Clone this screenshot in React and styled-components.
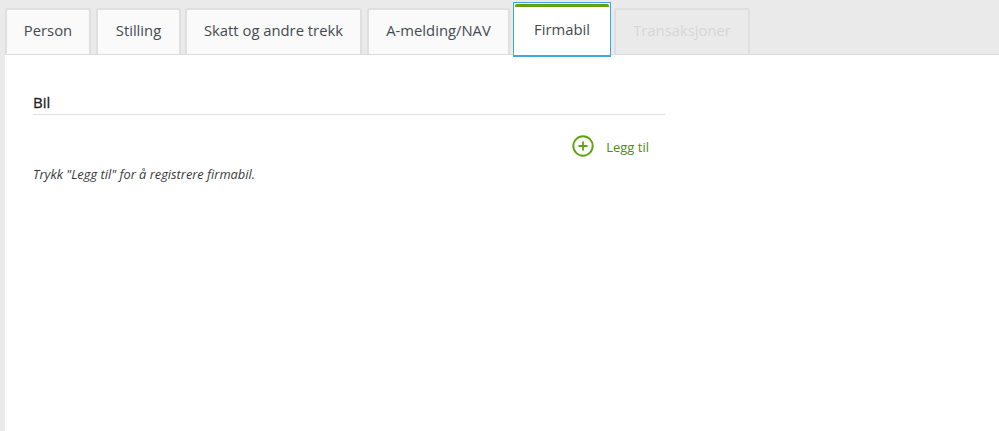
import React from "react";
import styled, { createGlobalStyle } from "styled-components";

const Global = createGlobalStyle`
  html, body { margin: 0; padding: 0; background: #fff; }
  body { font-family: "Open Sans", "Noto Sans", sans-serif; overflow: hidden; }
`;
const Page = styled.div`
  width: 999px; height: 431px; box-sizing: border-box;
  display: flex; flex-direction: column; background: #eaeaea; padding-left: 5px;
`;
const TabBar = styled.div`
  height: 54px; display: flex; align-items: flex-end; flex: none; position: relative; z-index: 1;
`;
const Tab = styled.div`
  box-sizing: border-box; height: 46px; width: ${p => p.$w}px; margin-right: ${p => p.$gap ?? 5}px;
  display: flex; align-items: center; justify-content: center; padding-bottom: 4px;
  font-size: 14.8px; color: ${p => (p.$disabled ? "#d6d6d6" : "#444b52")};
  background: ${p => (p.$disabled ? "#eaeaea" : "#fafafa")};
  border: 2px solid #dfdfdf; border-bottom: 0; border-radius: 3px 3px 0 0;
`;
const ActiveTab = styled.div`
  box-sizing: border-box; height: 55px; width: 98px; margin: 2px 3px 0 0; flex: none;
  align-self: flex-start;
  display: flex; align-items: center; justify-content: center;
  font-size: 14.8px; color: #444b52; background: #fff;
  border: 1px solid #3ea6e6; border-bottom-width: 2px; position: relative;
  &::before {
    content: ""; position: absolute; top: 1px; left: 1px; right: 1px; height: 3px;
    background: #5fa30f; border-radius: 2px 2px 0 0;
  }
`;
const Content = styled.div`
  flex: 1; background: #fff; border-top: 1px solid #dcdcdc; padding: 39px 0 0 28px;
`;
const Section = styled.div` width: 632px; `;
const Heading = styled.h2`
  margin: 0; height: 20px; line-height: 16px; font-size: 15px; font-weight: 400; color: #222;
  -webkit-text-stroke: 0.3px #222;
  border-bottom: 1px solid #dfdfdf; box-sizing: content-box;
`;
const Actions = styled.div`
  display: flex; justify-content: flex-end; align-items: center; gap: 12px;
  margin-top: 20px; padding-right: 16px; height: 22px;
`;
const AddLabel = styled.span` font-size: 13px; color: #4f8a20; padding-top: 1px; `;
const Hint = styled.p`
  margin: 9px 0 0; font-size: 12.85px; line-height: 17px; font-style: italic; color: #3a3a3a;
`;

const PlusIcon = () => (
  <svg width="22" height="22" viewBox="0 0 22 22" fill="none" stroke="#5fa30f">
    <circle cx="11" cy="11" r="9.7" strokeWidth="1.9" />
    <path d="M11 6.5v9M6.5 11h9" strokeWidth="1.8" />
  </svg>
);

export default function App() {
  return (
    <Page>
      <Global />
      <TabBar>
        <Tab $w={86}>Person</Tab>
        <Tab $w={85} $gap={4}>Stilling</Tab>
        <Tab $w={177}>Skatt og andre trekk</Tab>
        <Tab $w={143} $gap={3}>A-melding/NAV</Tab>
        <ActiveTab>Firmabil</ActiveTab>
        <Tab $w={136} $disabled>Transaksjoner</Tab>
      </TabBar>
      <Content>
        <Section>
          <Heading>Bil</Heading>
          <Actions>
            <PlusIcon />
            <AddLabel>Legg til</AddLabel>
          </Actions>
          <Hint>Trykk "Legg til" for å registrere firmabil.</Hint>
        </Section>
      </Content>
    </Page>
  );
}
